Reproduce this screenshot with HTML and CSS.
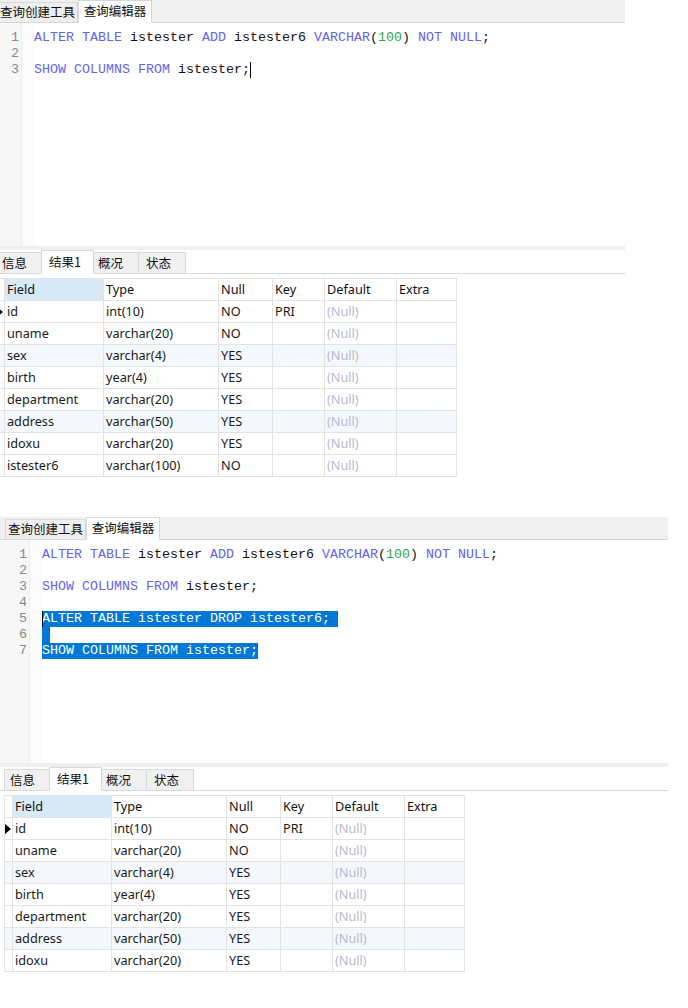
FILE: index.html
```html
<!DOCTYPE html>
<html>
<head>
<meta charset="utf-8">
<link rel="stylesheet" href="styles.css">
</head>
<body>
<div class="shot shot1">
  <div class="qtabs">
    <div class="qtab">查询创建工具</div>
    <div class="qtab active">查询编辑器</div>
  </div>
  <div class="editor">
    <div class="gutter">
      <div class="ln">1</div><div class="ln">2</div><div class="ln">3</div>
    </div>
    <div class="fold"></div>
    <div class="code">
      <div class="line"><span class="k">ALTER</span> <span class="k">TABLE</span> istester <span class="k">ADD</span> istester6 <span class="k">VARCHAR</span>(<span class="n">100</span>) <span class="k">NOT</span> <span class="k">NULL</span>;</div>
      <div class="line"> </div>
      <div class="line"><span class="k">SHOW</span> <span class="k">COLUMNS</span> <span class="k">FROM</span> istester;<span class="caret"></span></div>
    </div>
  </div>
  <div class="sep"></div>
  <div class="rtabs">
    <div class="rtab t1">信息</div>
    <div class="rtab t2 active">结果1</div>
    <div class="rtab t3">概况</div>
    <div class="rtab t4">状态</div>
  </div>
  <div class="grid">
    <div class="c ind hd"></div><div class="c hd field">Field</div><div class="c hd">Type</div><div class="c hd">Null</div><div class="c hd">Key</div><div class="c hd">Default</div><div class="c hd">Extra</div>
    <div class="c ind"><span class="tri"></span></div><div class="c">id</div><div class="c">int(10)</div><div class="c">NO</div><div class="c">PRI</div><div class="c nul">(Null)</div><div class="c"></div>
    <div class="c ind"></div><div class="c">uname</div><div class="c">varchar(20)</div><div class="c">NO</div><div class="c"></div><div class="c nul">(Null)</div><div class="c"></div>
    <div class="c ind t"></div><div class="c t">sex</div><div class="c t">varchar(4)</div><div class="c t">YES</div><div class="c t"></div><div class="c t nul">(Null)</div><div class="c t"></div>
    <div class="c ind"></div><div class="c">birth</div><div class="c">year(4)</div><div class="c">YES</div><div class="c"></div><div class="c nul">(Null)</div><div class="c"></div>
    <div class="c ind"></div><div class="c">department</div><div class="c">varchar(20)</div><div class="c">YES</div><div class="c"></div><div class="c nul">(Null)</div><div class="c"></div>
    <div class="c ind t"></div><div class="c t">address</div><div class="c t">varchar(50)</div><div class="c t">YES</div><div class="c t"></div><div class="c t nul">(Null)</div><div class="c t"></div>
    <div class="c ind"></div><div class="c">idoxu</div><div class="c">varchar(20)</div><div class="c">YES</div><div class="c"></div><div class="c nul">(Null)</div><div class="c"></div>
    <div class="c ind"></div><div class="c">istester6</div><div class="c">varchar(100)</div><div class="c">NO</div><div class="c"></div><div class="c nul">(Null)</div><div class="c"></div>
  </div>
</div>

<div class="shot shot2">
  <div class="qtabs">
    <div class="qtab">查询创建工具</div>
    <div class="qtab active">查询编辑器</div>
  </div>
  <div class="editor">
    <div class="gutter">
      <div class="ln">1</div><div class="ln">2</div><div class="ln">3</div><div class="ln">4</div><div class="ln">5</div><div class="ln">6</div><div class="ln">7</div>
    </div>
    <div class="fold"></div>
    <div class="code">
      <div class="line"><span class="k">ALTER</span> <span class="k">TABLE</span> istester <span class="k">ADD</span> istester6 <span class="k">VARCHAR</span>(<span class="n">100</span>) <span class="k">NOT</span> <span class="k">NULL</span>;</div>
      <div class="line"> </div>
      <div class="line"><span class="k">SHOW</span> <span class="k">COLUMNS</span> <span class="k">FROM</span> istester;</div>
      <div class="line"> </div>
      <div class="line"><span class="caret"></span><span class="sel">ALTER TABLE istester DROP istester6; </span></div>
      <div class="line"><span class="sel"> </span></div>
      <div class="line"><span class="sel">SHOW COLUMNS FROM istester;</span></div>
    </div>
  </div>
  <div class="sep"></div>
  <div class="rtabs">
    <div class="rtab t1">信息</div>
    <div class="rtab t2 active">结果1</div>
    <div class="rtab t3">概况</div>
    <div class="rtab t4">状态</div>
  </div>
  <div class="grid">
    <div class="c ind hd"></div><div class="c hd field">Field</div><div class="c hd">Type</div><div class="c hd">Null</div><div class="c hd">Key</div><div class="c hd">Default</div><div class="c hd">Extra</div>
    <div class="c ind"><span class="tri"></span></div><div class="c">id</div><div class="c">int(10)</div><div class="c">NO</div><div class="c">PRI</div><div class="c nul">(Null)</div><div class="c"></div>
    <div class="c ind"></div><div class="c">uname</div><div class="c">varchar(20)</div><div class="c">NO</div><div class="c"></div><div class="c nul">(Null)</div><div class="c"></div>
    <div class="c ind t"></div><div class="c t">sex</div><div class="c t">varchar(4)</div><div class="c t">YES</div><div class="c t"></div><div class="c t nul">(Null)</div><div class="c t"></div>
    <div class="c ind"></div><div class="c">birth</div><div class="c">year(4)</div><div class="c">YES</div><div class="c"></div><div class="c nul">(Null)</div><div class="c"></div>
    <div class="c ind"></div><div class="c">department</div><div class="c">varchar(20)</div><div class="c">YES</div><div class="c"></div><div class="c nul">(Null)</div><div class="c"></div>
    <div class="c ind t"></div><div class="c t">address</div><div class="c t">varchar(50)</div><div class="c t">YES</div><div class="c t"></div><div class="c t nul">(Null)</div><div class="c t"></div>
    <div class="c ind"></div><div class="c">idoxu</div><div class="c">varchar(20)</div><div class="c">YES</div><div class="c"></div><div class="c nul">(Null)</div><div class="c"></div>
  </div>
</div>
</body>
</html>
```

FILE: styles.css
```css
html, body {
  margin: 0;
  padding: 0;
  background: #ffffff;
}
body {
  width: 688px;
  height: 1008px;
  overflow: hidden;
  font-family: "Noto Sans", "Noto Sans CJK SC", sans-serif;
  color: #1a1a1a;
}
.shot {
  display: flex;
  flex-direction: column;
  background: #fff;
}
.shot1 {
  width: 633px;
  height: 517px;
  margin-left: -8px;
}
.shot2 {
  width: 668px;
  height: 491px;
}

/* query tabs */
.qtabs {
  height: 23px;
  box-sizing: border-box;
  background: #f0f0f0;
  border-bottom: 1px solid #d6d6d6;
  display: flex;
  align-items: flex-end;
  padding-left: 5px;
  font-family: "Noto Sans CJK SC", sans-serif;
  font-size: 12.5px;
}
.qtab {
  box-sizing: border-box;
  height: 21px;
  width: 81px;
  margin-bottom: -1px;
  border: 1px solid #dadada;
  border-bottom: 1px solid #d6d6d6;
  background: #eeeeee;
  display: flex;
  align-items: center;
  justify-content: center;
  line-height: 1;
  color: #111;
}
.qtab.active {
  height: 23px;
  width: 74px;
  background: #ffffff;
  border-color: #d6d6d6;
  border-bottom-color: #ffffff;
}

/* editor */
.editor {
  height: 223px;
  display: flex;
  font-family: "Liberation Mono", monospace;
  font-size: 13.33px;
}
.gutter {
  width: 30px;
  box-sizing: border-box;
  background: #f7f7f7;
  border-right: 1px solid #ededed;
  padding-top: 7px;
}
.ln {
  height: 16px;
  line-height: 16px;
  text-align: right;
  padding-right: 2px;
  color: #8a8a8a;
}
.fold {
  width: 12px;
  background: #fcfcfc;
}
.code {
  flex: 1;
  padding-top: 7px;
  color: #111;
}
.line {
  height: 16px;
  line-height: 16px;
  white-space: pre;
}
.k { color: #6262f4; }
.n { color: #2ea84a; }
.sel {
  display: inline-block;
  height: 16px;
  vertical-align: top;
  background: #0078d7;
  color: #ffffff;
}
.caret {
  display: inline-block;
  width: 1px;
  height: 16px;
  margin-right: -1px;
  vertical-align: top;
  background: #000;
  position: relative;
  z-index: 1;
}

.sep {
  height: 4px;
  background: #efefef;
}

/* result tabs */
.rtabs {
  height: 24px;
  box-sizing: border-box;
  border-bottom: 1px solid #d9d9d9;
  display: flex;
  align-items: flex-end;
  padding-left: 4px;
  font-family: "Noto Sans CJK SC", sans-serif;
  font-size: 12.5px;
}
.rtab {
  box-sizing: border-box;
  height: 22px;
  margin-bottom: -1px;
  background: #f0f0f0;
  border: 1px solid #d9d9d9;
  margin-right: -1px;
  display: flex;
  align-items: center;
  padding-left: 5px;
  line-height: 1;
  color: #111;
}
.rtab.t1 { width: 46px; }
.rtab.t2 { width: 53px; padding-left: 7px; }
.rtab.t3 { width: 46px; padding-left: 4px; }
.rtab.t4 { width: 48px; padding-left: 7px; }
.rtab.active {
  height: 24px;
  background: #ffffff;
  border-bottom-color: #ffffff;
  position: relative;
  z-index: 1;
}

/* grid */
.grid {
  margin-top: 4px;
  margin-left: 4px;
  display: grid;
  grid-template-columns: 8px 99px 115px 54px 52px 72px 60px;
  grid-auto-rows: 22px;
  width: 460px;
  border-top: 1px solid #e3e3e3;
  border-left: 1px solid #e6e6e6;
  font-size: 12.7px;
}
.c {
  box-sizing: border-box;
  border-right: 1px solid #e3e3e3;
  border-bottom: 1px solid #e3e3e3;
  padding-left: 2px;
  padding-bottom: 1px;
  display: flex;
  align-items: center;
  white-space: nowrap;
  overflow: hidden;
  color: #1a1a1a;
}
.c.ind { padding-left: 0; padding-bottom: 0; }
.c.hd { color: #111; }
.c.field { background: #d8e9f8; }
.c.t { background: #f4f8fc; }
.c.nul { color: #b9b9cf; }
.tri {
  width: 0;
  height: 0;
  border-left: 6px solid #000;
  border-top: 5px solid transparent;
  border-bottom: 5px solid transparent;
}
```
